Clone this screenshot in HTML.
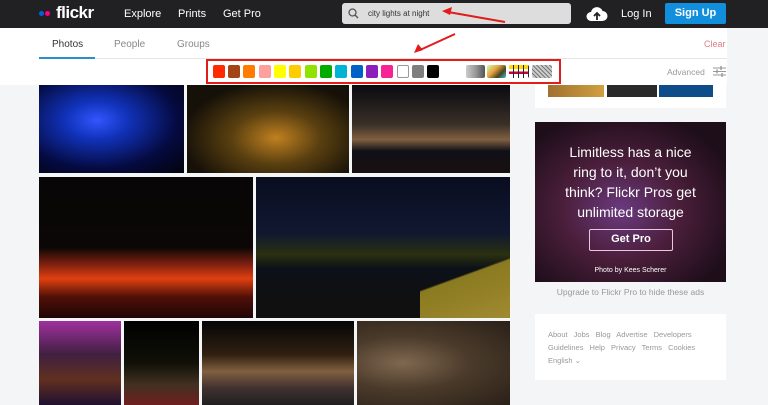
<!DOCTYPE html>
<html><head><meta charset="utf-8"><style>
*{margin:0;padding:0;box-sizing:border-box}
body{width:768px;height:405px;overflow:hidden;background:#f3f5f6;font-family:"Liberation Sans",sans-serif;position:relative}
.a{position:absolute}
.hdr{left:0;top:0;width:768px;height:28px;background:#212124}
.nav{color:#fff;font-size:11px;top:8px}
.sw{top:65px;width:12px;height:13px;border-radius:2px}
.ph{position:absolute}
.ft{color:#999;font-size:7.5px}
</style></head><body>
<div class="a hdr"></div>
<div class="a" style="left:39px;top:11px;width:5px;height:5px;border-radius:50%;background:#0063dc"></div>
<div class="a" style="left:45px;top:11px;width:5px;height:5px;border-radius:50%;background:#ff0084"></div>
<div class="a" style="left:56px;top:3px;color:#fff;font-size:17px;font-weight:bold;letter-spacing:-0.5px">flickr</div>
<div class="a nav" style="left:124px">Explore</div>
<div class="a nav" style="left:178px">Prints</div>
<div class="a nav" style="left:223px">Get Pro</div>
<div class="a" style="left:342px;top:3px;width:229px;height:21px;background:#ddd;border-radius:3px"></div>
<svg class="a" style="left:348px;top:8px" width="11" height="11" viewBox="0 0 11 11"><circle cx="4.5" cy="4.5" r="3.5" fill="none" stroke="#555" stroke-width="1.3"/><path d="M7 7l3 3" stroke="#555" stroke-width="1.4"/></svg>
<div class="a" style="left:368px;top:9px;font-size:8px;color:#333">city lights at night</div>
<svg class="a" style="left:586px;top:6px" width="22" height="16" viewBox="0 0 22 16"><path d="M5 15a4.5 4.5 0 0 1 0-9a6 6 0 0 1 11.5-1a5 5 0 0 1 0 10z" fill="#fff"/><path d="M11 14V8M8 10l3-3l3 3" stroke="#212124" stroke-width="1.8" fill="none"/></svg>
<div class="a nav" style="left:621px">Log In</div>
<div class="a" style="left:665px;top:3px;width:61px;height:21px;background:#128fdc;border-radius:2px;color:#fff;font-size:11px;font-weight:bold;text-align:center;line-height:21px">Sign Up</div>
<div class="a" style="left:0;top:28px;width:727px;height:57px;background:#fff"></div>
<svg class="a" style="left:0;top:0" width="768" height="90"><path d="M505 22 L448 12" stroke="#e21b1b" stroke-width="2"/><path d="M442 11 l10 -4 l-2 8z" fill="#e21b1b"/><path d="M455 34 L420 50" stroke="#e21b1b" stroke-width="2"/><path d="M414 53 l4 -9 l5 6z" fill="#e21b1b"/></svg>
<div class="a" style="left:52px;top:39px;font-size:10px;color:#333">Photos</div>
<div class="a" style="left:114px;top:39px;font-size:10px;color:#888">People</div>
<div class="a" style="left:177px;top:39px;font-size:10px;color:#888">Groups</div>
<div class="a" style="left:704px;top:39px;font-size:9px;color:#e07a8a">Clear</div>
<div class="a" style="left:39px;top:58px;width:688px;height:1px;background:#e5e5e5"></div>
<div class="a" style="left:39px;top:57px;width:56px;height:2px;background:#2a8fc9"></div>
<div class="a" style="left:667px;top:67px;font-size:8.5px;color:#999">Advanced</div>
<svg class="a" style="left:713px;top:66px" width="13" height="11"><path d="M0 2h13M0 5.5h13M0 9h13" stroke="#999" stroke-width="1"/><path d="M8 0v4M4 3.5v4M9 7v4" stroke="#999" stroke-width="1.4"/></svg>
<div class="a" style="left:206px;top:59px;width:355px;height:25px;border:2px solid #e21b1b"></div>
<div class="a sw" style="left:213px;background:#ff2a00"></div>
<div class="a sw" style="left:228px;background:#a24615"></div>
<div class="a sw" style="left:243px;background:#ff7c00"></div>
<div class="a sw" style="left:259px;background:#ff9f9c"></div>
<div class="a sw" style="left:274px;background:#ffff00"></div>
<div class="a sw" style="left:289px;background:#ffcc00"></div>
<div class="a sw" style="left:305px;background:#90e200"></div>
<div class="a sw" style="left:320px;background:#00ab00"></div>
<div class="a sw" style="left:335px;background:#00b2d4"></div>
<div class="a sw" style="left:351px;background:#0062c6"></div>
<div class="a sw" style="left:366px;background:#8c20ba"></div>
<div class="a sw" style="left:381px;background:#f52394"></div>
<div class="a sw" style="left:397px;background:#fff;border:1px solid #999"></div>
<div class="a sw" style="left:412px;background:#7e7e7e"></div>
<div class="a sw" style="left:427px;background:#000"></div>
<div class="a sw" style="left:466px;width:19px;background:linear-gradient(90deg,#ccc,#999,#555)"></div>
<div class="a sw" style="left:487px;width:19px;background:linear-gradient(135deg,#cfa,#e8a040 40%,#442 70%,#5bc)"></div>
<div class="a sw" style="left:509px;width:20px;background:linear-gradient(180deg,#ffd800 0 30%,#fff 30% 50%,#c03 50% 70%,#fff 70%)"></div>
<div class="a sw" style="left:509px;width:20px;background:repeating-linear-gradient(90deg,transparent 0 4px,#223 4px 5px)"></div>
<div class="a sw" style="left:532px;width:20px;background:repeating-linear-gradient(45deg,#777 0 1px,#ccc 1px 3px)"></div>
<!-- photos -->
<div class="ph" style="left:39px;top:85px;width:145px;height:88px;background:radial-gradient(ellipse at 40% 40%,#3355ff 0,#1133bb 25%,#050a40 65%,#02030a)"></div>
<div class="ph" style="left:187px;top:85px;width:162px;height:88px;background:radial-gradient(ellipse at 55% 60%,#c08020,#5a4010 35%,#151008 75%)"></div>
<div class="ph" style="left:352px;top:85px;width:158px;height:88px;background:linear-gradient(180deg,#0a0a10,#3a3028 45%,#806040 62%,#101018 75%,#181010)"></div>
<div class="ph" style="left:39px;top:177px;width:214px;height:141px;background:linear-gradient(180deg,#080606 0,#0a0706 50%,#802010 62%,#e04010 72%,#501008 85%,#200605)"></div>
<div class="ph" style="left:256px;top:177px;width:254px;height:141px;background:linear-gradient(180deg,#0a0d20,#101830 40%,#2a3010 55%,#0c1018 65%,#101010 90%)"></div>
<div class="ph" style="left:420px;top:250px;width:90px;height:68px;background:linear-gradient(160deg,transparent 40%,#8a7a20 42%,#a08a30)"></div>
<div class="ph" style="left:39px;top:321px;width:82px;height:84px;background:linear-gradient(180deg,#a030a0,#402040 40%,#603020 70%,#201030)"></div>
<div class="ph" style="left:124px;top:321px;width:75px;height:84px;background:linear-gradient(180deg,#000,#101008 50%,#403020 75%,#702020)"></div>
<div class="ph" style="left:202px;top:321px;width:152px;height:84px;background:linear-gradient(180deg,#050508,#302010 40%,#806040 60%,#403030 80%,#202020)"></div>
<div class="ph" style="left:357px;top:321px;width:153px;height:84px;background:radial-gradient(ellipse at 30% 50%,#806850,#4a3a2a 45%,#2a2018)"></div>
<!-- right -->
<div class="a" style="left:535px;top:85px;width:191px;height:23px;background:#fff"></div>
<div class="a" style="left:548px;top:85px;width:56px;height:12px;background:linear-gradient(90deg,#a07030,#d0a040)"></div>
<div class="a" style="left:607px;top:85px;width:50px;height:12px;background:#2a2a2a"></div>
<div class="a" style="left:659px;top:85px;width:54px;height:12px;background:#0f4c8a"></div>
<div class="a" style="left:535px;top:122px;width:191px;height:160px;background:radial-gradient(ellipse at 45% 55%,#6a3a80,#4a1e3a 40%,#1e0e1a 80%)"></div>
<div class="a" style="left:535px;top:142px;width:191px;color:#fff;font-size:14px;line-height:20px;text-align:center">Limitless has a nice<br>ring to it, don’t you<br>think? Flickr Pros get<br>unlimited storage</div>
<div class="a" style="left:589px;top:229px;width:84px;height:22px;border:1.5px solid #e9c8e0;border-radius:2px;color:#fff;font-size:11px;font-weight:bold;text-align:center;line-height:19px">Get Pro</div>
<div class="a" style="left:535px;top:267px;width:191px;color:#fff;font-size:7px;text-align:center">Photo by Kees Scherer</div>
<div class="a" style="left:535px;top:287px;width:191px;color:#999;font-size:8.5px;text-align:center">Upgrade to Flickr Pro to hide these ads</div>
<div class="a" style="left:535px;top:314px;width:191px;height:66px;background:#fff"></div>
<div class="a ft" style="left:548px;top:330px;word-spacing:4px">About Jobs Blog Advertise Developers</div>
<div class="a ft" style="left:548px;top:343px;word-spacing:4px">Guidelines Help Privacy Terms Cookies</div>
<div class="a ft" style="left:548px;top:356px">English ⌄</div>
</body></html>
